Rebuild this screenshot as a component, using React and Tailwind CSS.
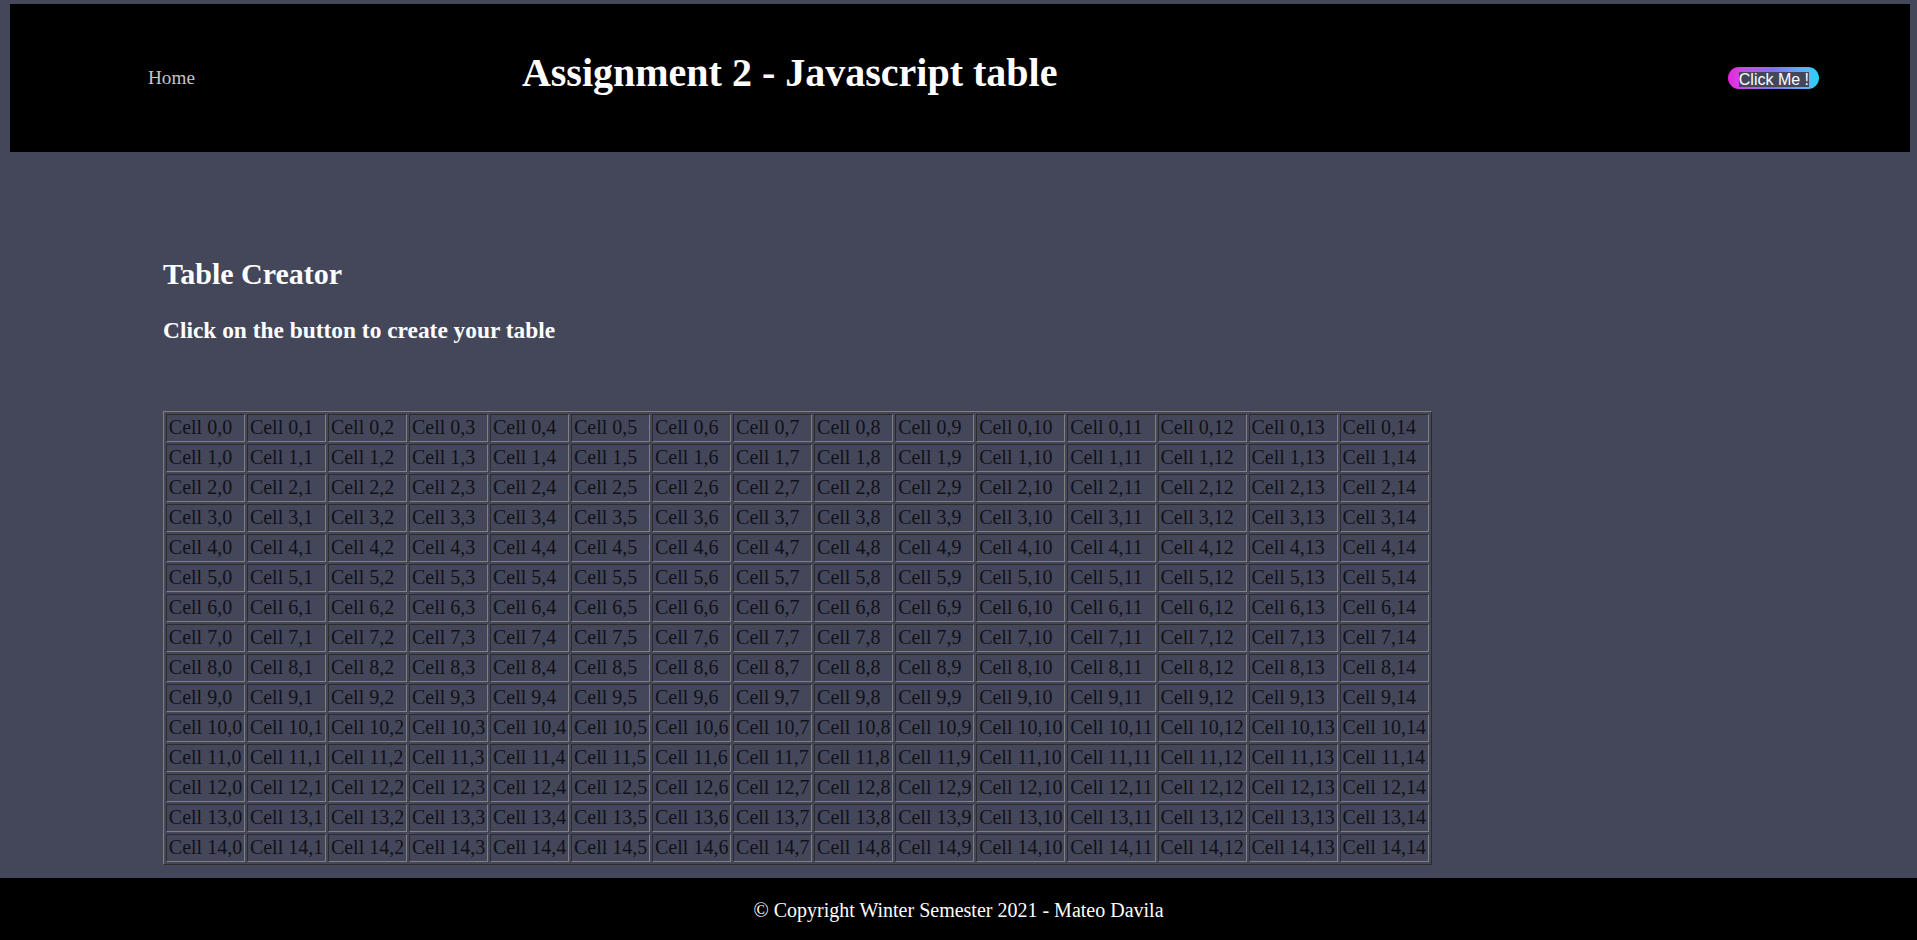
import React from "react";

const rows = Array.from({ length: 15 }, (_, i) => i);
const cols = Array.from({ length: 15 }, (_, j) => j);

const App = () => {
  return (
    <div className="min-h-screen bg-[#44475a] font-['Liberation_Serif',serif] flex flex-col">
      <header className="mt-[4px] ml-[10px] mr-[7px] h-[148px] bg-black flex items-center pl-[138px] pr-[91px]">
        <a className="text-[19.2px] leading-[22px] text-[#c4c4cc]">Home</a>
        <h1 className="ml-[327px] mb-[11px] text-[40px] leading-[46px] font-bold text-white">
          Assignment 2 - Javascript table
        </h1>
        <button className="ml-auto rounded-full bg-gradient-to-r from-[#e81cdc] via-[#7f70f0] to-[#1fd1f9] pl-[11px] pr-[10px] pt-[5px] pb-[2px] font-['Liberation_Sans',Arial,sans-serif]">
          <span className="block bg-[#44475a] text-white text-[16px] leading-[15px] h-[15.5px]">Click Me !</span>
        </button>
      </header>

      <main className="pl-[163px] pt-[105px] pb-[13.5px]">
        <h2 className="text-[30px] leading-[34.5px] font-bold text-white">Table Creator</h2>
        <h3 className="mt-[25.5px] text-[23.4px] leading-[27px] font-bold text-white">
          Click on the button to create your table
        </h3>
        <table className="mt-[66.5px] border-separate border-spacing-[2px] border border-[gray] [border-style:outset] text-[20px] leading-[23px] text-[#111118]">
          <tbody>
            {rows.map((i) => (
              <tr key={i}>
                {cols.map((j) => (
                  <td key={j} className="border border-[gray] [border-style:inset] px-[1.85px] py-[1.5px] whitespace-nowrap">
                    Cell {i},{j}
                  </td>
                ))}
              </tr>
            ))}
          </tbody>
        </table>
      </main>

      <footer className="bg-black text-white text-center text-[20px] leading-[23px] pt-[21px] pb-[22px]">
        © Copyright Winter Semester 2021 - Mateo Davila
      </footer>
    </div>
  );
};

export default App;
